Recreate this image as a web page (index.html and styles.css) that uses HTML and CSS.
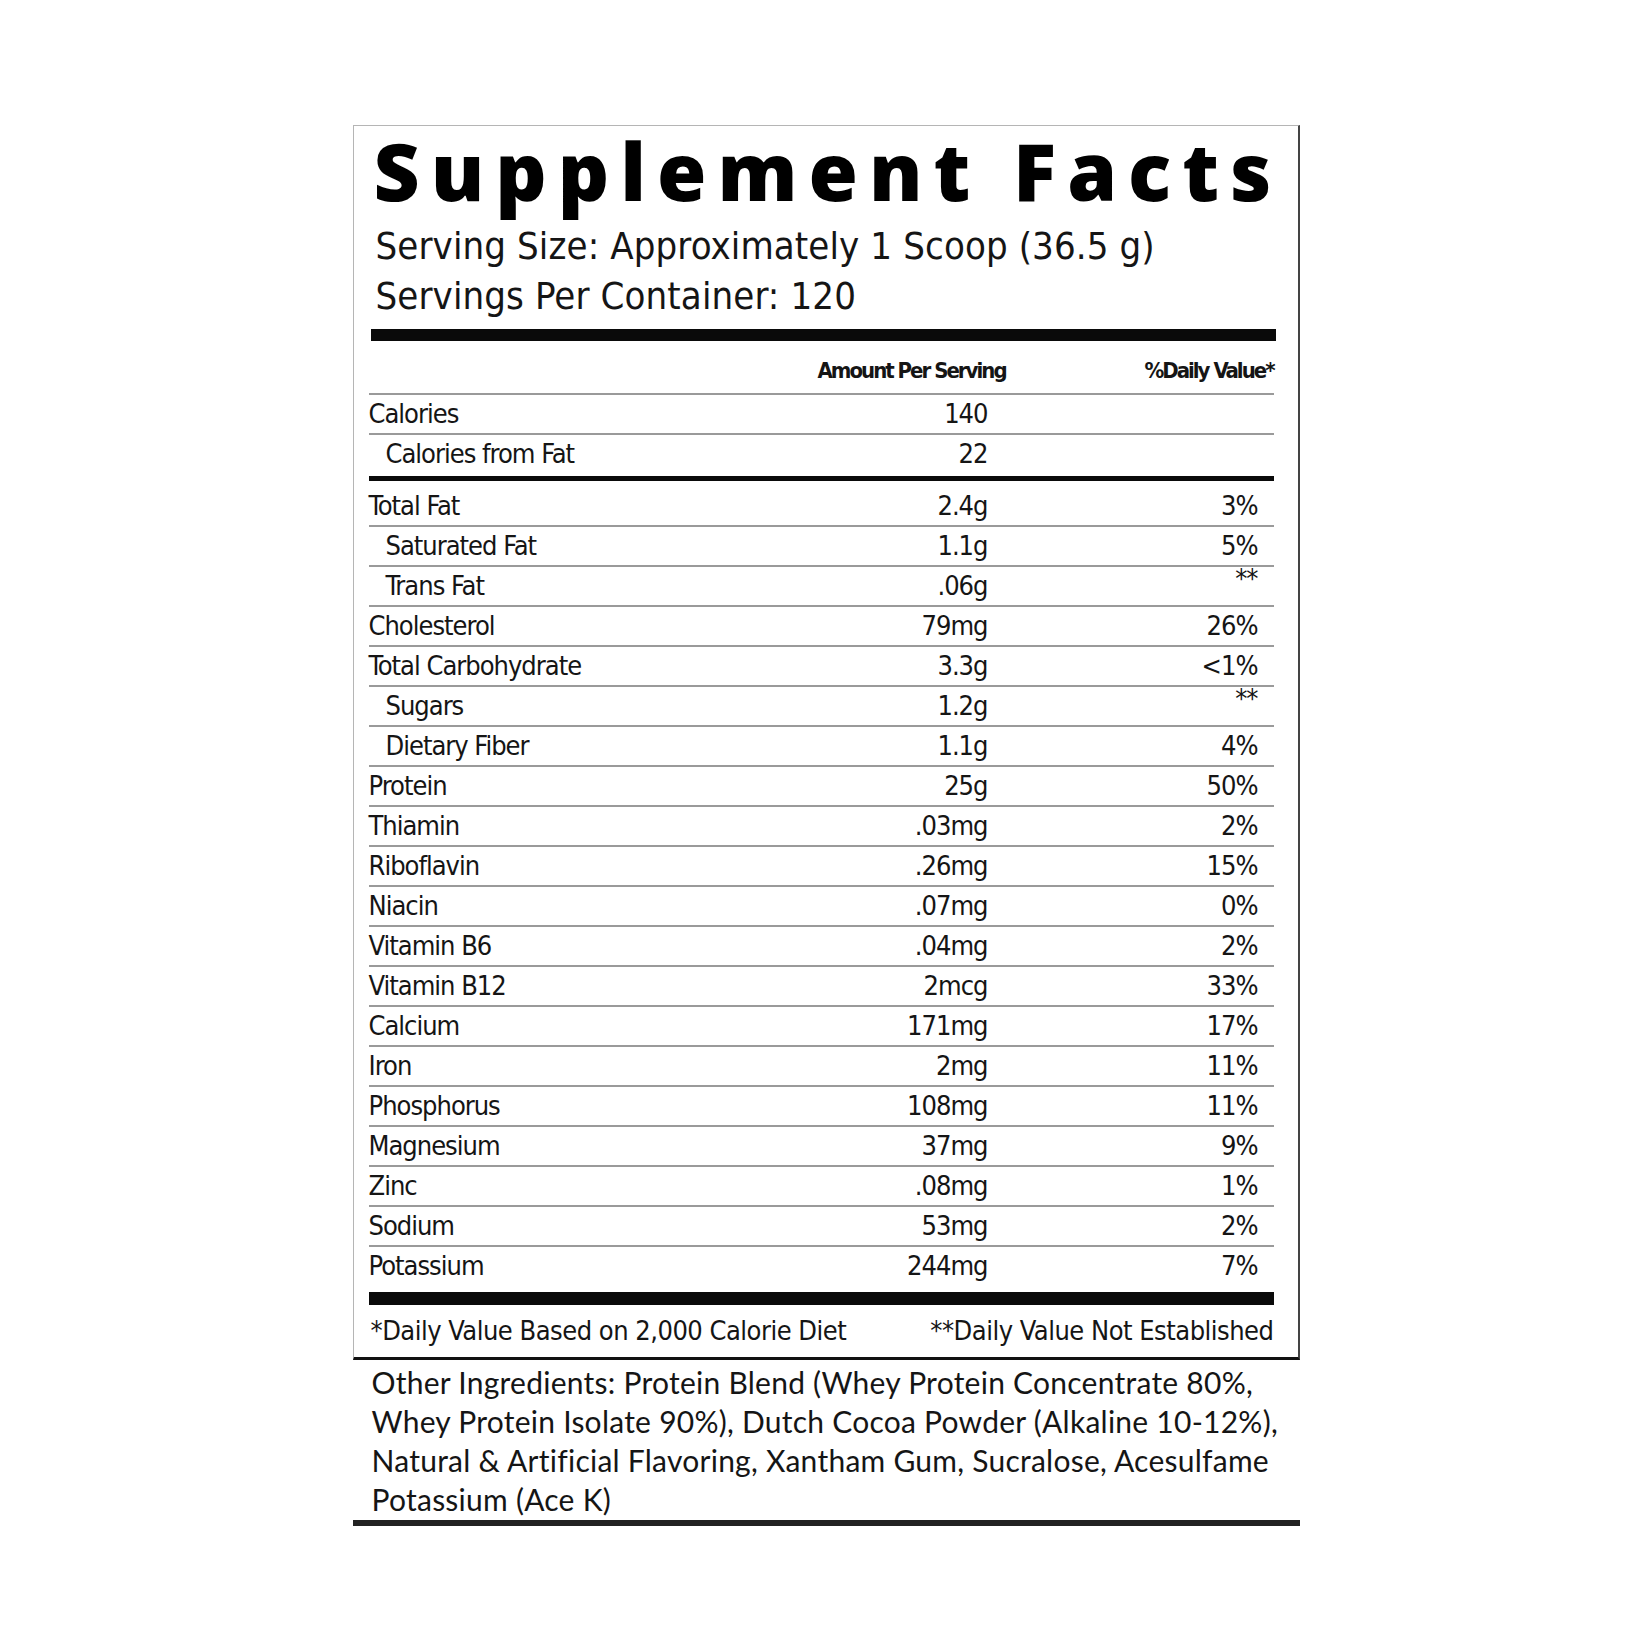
FILE: index.html
```html
<!DOCTYPE html>
<html lang="en">
<head>
    <meta charset="UTF-8">
    <meta name="viewport" content="width=device-width, initial-scale=1.0">
    <title>Supplement Facts</title>
    <link rel="stylesheet" href="styles.css">
</head>
<body>
    <div class="label">
        <div class="facts">
            <h1 class="title">Supplement Facts</h1>
            <div class="serving">
                <div>Serving Size: Approximately 1 Scoop (36.5 g)</div>
                <div>Servings Per Container: 120</div>
            </div>
            <div class="bar"></div>

            <div class="table">
                <div class="row head">
                    <div></div>
                    <div class="amount">Amount Per Serving</div>
                    <div class="dv">%Daily Value*</div>
                </div>

                <div class="row">
                    <div class="name">Calories</div>
                    <div class="amount">140</div>
                    <div class="dv"></div>
                </div>
                <div class="row thick">
                    <div class="name sub">Calories from Fat</div>
                    <div class="amount">22</div>
                    <div class="dv"></div>
                </div>
                <div class="row first">
                    <div class="name">Total Fat</div>
                    <div class="amount">2.4g</div>
                    <div class="dv">3%</div>
                </div>
                <div class="row">
                    <div class="name sub">Saturated Fat</div>
                    <div class="amount">1.1g</div>
                    <div class="dv">5%</div>
                </div>
                <div class="row">
                    <div class="name sub">Trans Fat</div>
                    <div class="amount">.06g</div>
                    <div class="dv star">**</div>
                </div>
                <div class="row">
                    <div class="name">Cholesterol</div>
                    <div class="amount">79mg</div>
                    <div class="dv">26%</div>
                </div>
                <div class="row">
                    <div class="name">Total Carbohydrate</div>
                    <div class="amount">3.3g</div>
                    <div class="dv">&lt;1%</div>
                </div>
                <div class="row">
                    <div class="name sub">Sugars</div>
                    <div class="amount">1.2g</div>
                    <div class="dv star">**</div>
                </div>
                <div class="row">
                    <div class="name sub">Dietary Fiber</div>
                    <div class="amount">1.1g</div>
                    <div class="dv">4%</div>
                </div>
                <div class="row">
                    <div class="name">Protein</div>
                    <div class="amount">25g</div>
                    <div class="dv">50%</div>
                </div>
                <div class="row">
                    <div class="name">Thiamin</div>
                    <div class="amount">.03mg</div>
                    <div class="dv">2%</div>
                </div>
                <div class="row">
                    <div class="name">Riboflavin</div>
                    <div class="amount">.26mg</div>
                    <div class="dv">15%</div>
                </div>
                <div class="row">
                    <div class="name">Niacin</div>
                    <div class="amount">.07mg</div>
                    <div class="dv">0%</div>
                </div>
                <div class="row">
                    <div class="name">Vitamin B6</div>
                    <div class="amount">.04mg</div>
                    <div class="dv">2%</div>
                </div>
                <div class="row">
                    <div class="name">Vitamin B12</div>
                    <div class="amount">2mcg</div>
                    <div class="dv">33%</div>
                </div>
                <div class="row">
                    <div class="name">Calcium</div>
                    <div class="amount">171mg</div>
                    <div class="dv">17%</div>
                </div>
                <div class="row">
                    <div class="name">Iron</div>
                    <div class="amount">2mg</div>
                    <div class="dv">11%</div>
                </div>
                <div class="row">
                    <div class="name">Phosphorus</div>
                    <div class="amount">108mg</div>
                    <div class="dv">11%</div>
                </div>
                <div class="row">
                    <div class="name">Magnesium</div>
                    <div class="amount">37mg</div>
                    <div class="dv">9%</div>
                </div>
                <div class="row">
                    <div class="name">Zinc</div>
                    <div class="amount">.08mg</div>
                    <div class="dv">1%</div>
                </div>
                <div class="row">
                    <div class="name">Sodium</div>
                    <div class="amount">53mg</div>
                    <div class="dv">2%</div>
                </div>
                <div class="row last">
                    <div class="name">Potassium</div>
                    <div class="amount">244mg</div>
                    <div class="dv">7%</div>
                </div>
            </div>

            <div class="bar bottom"></div>

            <div class="notes">
                <span>*Daily Value Based on 2,000 Calorie Diet</span>
                <span>**Daily Value Not Established</span>
            </div>
        </div>

        <p class="ingredients">
            Other Ingredients: Protein Blend (Whey Protein Concentrate 80%,<br>
            Whey Protein Isolate 90%), Dutch Cocoa Powder (Alkaline 10-12%),<br>
            Natural &amp; Artificial Flavoring, Xantham Gum, Sucralose, Acesulfame<br>
            Potassium (Ace K)
        </p>
    </div>
</body>
</html>
```

FILE: styles.css
```css
* {
    margin: 0;
    padding: 0;
    box-sizing: border-box;
}

body {
    background-color: #fff;
    color: #151515;
    font-family: "DejaVu Sans Condensed", "DejaVu Sans", sans-serif;
}

.label {
    width: 947px;
    margin: 125px auto 0;
}

.facts {
    border-top: 1px solid #b5b5b5;
    border-left: 1px solid #b5b5b5;
    border-right: 2px solid #444;
    border-bottom: 3px solid #111;
    padding: 5px 22px 0 17px;
}

.title {
    padding-left: 3px;
    font-family: "Open Sans", sans-serif;
    font-weight: 800;
    font-size: 80px;
    line-height: 78px;
    letter-spacing: 11px;
    white-space: nowrap;
    color: #000;
}

.serving {
    margin-top: 12px;
    padding-left: 5px;
    font-size: 38px;
    line-height: 50px;
    letter-spacing: 0.1px;
}

.bar {
    height: 12px;
    background-color: #0a0a0a;
    margin-top: 8px;
}

.table {
    margin: 0 2px 0 -2px;
}

.row {
    display: grid;
    grid-template-columns: 1fr 170px 286px;
    height: 40px;
    line-height: 38px;
    font-size: 27px;
    letter-spacing: -1px;
    border-bottom: 2px solid #9a9a9a;
}

.row .amount {
    text-align: right;
}

.row .dv {
    text-align: right;
    padding-right: 16px;
}

.row .dv.star {
    line-height: 24px;
}

.row .sub {
    padding-left: 17px;
}

.row.head {
    height: 54px;
    padding-top: 11px;
    font-weight: 700;
    font-size: 22px;
    letter-spacing: -2px;
}

.row.head .amount {
    margin-right: -5px;
    white-space: nowrap;
}

.row.head .dv {
    padding-right: 0;
    white-space: nowrap;
}

.row.thick {
    height: 46px;
    border-bottom: 5px solid #0a0a0a;
}

.row.first {
    height: 46px;
    padding-top: 6px;
}

.row.last {
    height: 45px;
    border-bottom: none;
}

.bar.bottom {
    height: 13px;
    margin: 0 2px 0 -2px;
}

.notes {
    display: flex;
    justify-content: space-between;
    height: 52px;
    line-height: 52px;
    font-size: 27px;
    letter-spacing: -0.5px;
    white-space: nowrap;
    padding-right: 2px;
}

.ingredients {
    padding: 3px 0 0 19px;
    font-family: Lato, sans-serif;
    font-size: 30px;
    line-height: 39px;
    letter-spacing: 0.25px;
    border-bottom: 6px solid #222;
    height: 166px;
}
```
